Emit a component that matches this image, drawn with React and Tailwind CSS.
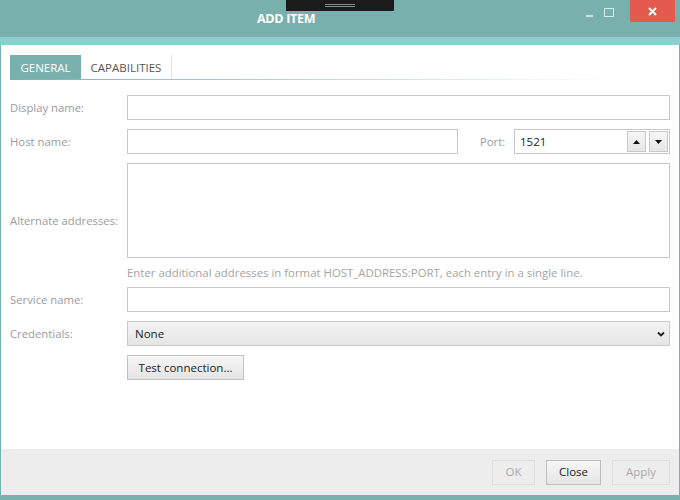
import React from "react";

const font = { fontFamily: '"Open Sans", "Noto Sans", sans-serif' };

function Label({ children, className = "" }) {
  return <div className={"text-[11.3px] text-[#9c9c9c] leading-none " + className}>{children}</div>;
}

export default function App() {
  return (
    <div className="w-[680px] h-[500px] flex flex-col bg-[#78b0ae] overflow-hidden" style={font}>
      {/* title bar */}
      <div className="relative h-[37px] shrink-0">
        <div className="absolute left-[286px] top-0 w-[108px] h-[11px] bg-[#1b1b1b] flex flex-col items-center justify-center gap-[1px]">
          <div className="w-[30px] h-px bg-[#8a8a8a]" />
          <div className="w-[30px] h-px bg-[#8a8a8a]" />
        </div>
        <div className="absolute left-[257px] top-[10px] text-white font-bold text-[12.5px] tracking-[-0.3px]">ADD ITEM</div>
        <div className="absolute left-[586px] top-[15px] w-[7px] h-[2px] bg-[#c9e3e2]" />
        <div className="absolute left-[604px] top-[8px] w-[10px] h-[9px] border border-[#d6eceb]" />
        <div className="absolute left-[630px] top-0 w-[45px] h-[22px] bg-[#e55a4f] flex items-center justify-center">
          <svg width="9" height="9" viewBox="0 0 9 9">
            <path d="M1 1L8 8M8 1L1 8" stroke="white" strokeWidth="2" />
          </svg>
        </div>
      </div>
      <div className="h-[8px] shrink-0 bg-[#8fcece]" />
      {/* body */}
      <div className="flex-1 flex flex-col mx-px bg-white">
        <div className="flex-1 pl-[9px] pr-[9px] pt-[10px]">
          {/* tabs */}
          <div className="flex h-[25px] relative">
            <div className="w-[71px] bg-[#78b0ae] text-white text-[11.5px] flex items-center justify-center">GENERAL</div>
            <div className="w-[91px] text-[#555] text-[11.5px] flex items-center justify-center border-r border-[#d8e6e6]">CAPABILITIES</div>
            <div className="absolute left-0 bottom-0 w-[600px] h-px bg-gradient-to-r from-[#78b0ae] to-white" />
          </div>
          {/* form */}
          <div className="mt-[15px] grid grid-cols-[117px_1fr] gap-y-[9px] items-center">
            <Label>Display name:</Label>
            <div className="h-[25px] border border-[#c8c8c8]" />

            <Label>Host name:</Label>
            <div className="flex items-center">
              <div className="w-[331px] h-[25px] border border-[#c8c8c8]" />
              <div className="ml-[22px] w-[34px]"><Label>Port:</Label></div>
              <div className="flex-1 h-[25px] border border-[#c8c8c8] flex items-center pl-[5px] pr-[1px]">
                <span className="flex-1 text-[11.5px] text-[#222]">1521</span>
                <div className="w-[19px] h-[21px] border border-[#c8c8c8] bg-gradient-to-b from-[#f6f6f6] to-[#e6e6e6] flex items-center justify-center">
                  <svg width="7" height="4" viewBox="0 0 7 4"><path d="M0 4L3.5 0L7 4Z" fill="#111" /></svg>
                </div>
                <div className="ml-[3px] w-[19px] h-[21px] border border-[#c8c8c8] bg-gradient-to-b from-[#f6f6f6] to-[#e6e6e6] flex items-center justify-center">
                  <svg width="7" height="4" viewBox="0 0 7 4"><path d="M0 0L3.5 4L7 0Z" fill="#111" /></svg>
                </div>
              </div>
            </div>

            <Label className="row-span-2">Alternate addresses:</Label>
            <div className="h-[95px] border border-[#c8c8c8]" />
            <div className="h-[11px] flex items-center">
              <div className="text-[11.4px] text-[#a4a4a4] leading-none whitespace-nowrap">
                Enter additional addresses in format HOST_ADDRESS:PORT, each entry in a single line.
              </div>
            </div>

            <Label>Service name:</Label>
            <div className="h-[25px] border border-[#c8c8c8]" />

            <Label>Credentials:</Label>
            <div className="h-[25px] border border-[#c8c8c8] bg-gradient-to-b from-[#f3f3f3] to-[#e5e5e5] flex items-center pl-[7px] pr-[4px]">
              <span className="flex-1 text-[11.5px] text-[#222]">None</span>
              <svg width="8" height="6" viewBox="0 0 8 6"><path d="M1 1.5L4 4.5L7 1.5" stroke="#222" strokeWidth="1.8" fill="none" /></svg>
            </div>

            <div />
            <div>
              <div className="w-[117px] h-[25px] border border-[#c2c2c2] bg-gradient-to-b from-[#f6f6f6] to-[#e4e4e4] flex items-center justify-center text-[11.5px] text-[#222]">
                Test connection...
              </div>
            </div>
          </div>
        </div>
        {/* footer */}
        <div className="h-[46px] shrink-0 bg-[#ededed] flex items-center justify-end gap-[11px] pr-[9px]">
          <div className="w-[43px] h-[25px] border border-[#dcdcdc] text-[#aaa] text-[11.5px] flex items-center justify-center">OK</div>
          <div className="w-[55px] h-[25px] border border-[#bdbdbd] bg-gradient-to-b from-[#f6f6f6] to-[#e6e6e6] text-[#222] text-[11.5px] flex items-center justify-center">Close</div>
          <div className="w-[58px] h-[25px] border border-[#dcdcdc] text-[#aaa] text-[11.5px] flex items-center justify-center">Apply</div>
        </div>
      </div>
      <div className="h-[5px] shrink-0" />
    </div>
  );
}
